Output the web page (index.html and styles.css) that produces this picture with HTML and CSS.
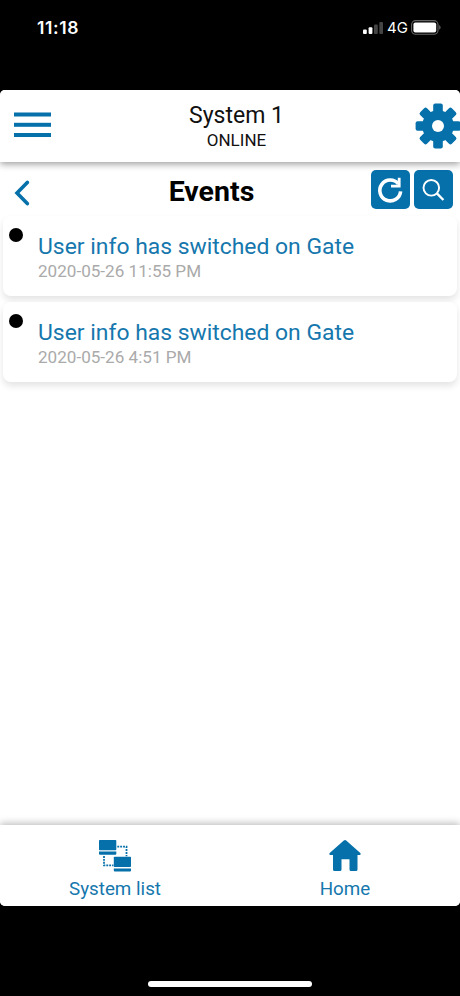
FILE: index.html
```html
<!DOCTYPE html>
<html lang="en">
  <head>
    <meta charset="UTF-8" />
    <meta name="viewport" content="width=device-width, initial-scale=1.0" />
    <title>Events</title>
    <link rel="stylesheet" href="styles.css">
  </head>
  <body>
    <div class="status-bar">
      <span class="time">11:18</span>
      <svg class="signal" width="20" height="12" viewBox="0 0 20 12">
        <rect x="0" y="7.5" width="3.8" height="4.5" rx="1" fill="#fff" />
        <rect x="5.6" y="5.2" width="3.8" height="6.8" rx="1" fill="#fff" />
        <rect x="11" y="2.6" width="3.8" height="9.4" rx="1" fill="#444" />
        <rect x="16.3" y="0" width="3.7" height="12" rx="1" fill="#444" />
      </svg>
      <span class="network">4G</span>
      <svg class="battery" width="30" height="15" viewBox="0 0 30 15">
        <rect x="0.6" y="0.6" width="26.4" height="13.6" rx="4" fill="none" stroke="#666" stroke-width="1.1" />
        <rect x="2.4" y="2.4" width="22.8" height="10" rx="2" fill="#fff" />
        <path d="M28.2 5.2c1.8.6 1.8 3.8 0 4.4z" fill="#666" />
      </svg>
    </div>

    <div class="app">
      <header class="header">
        <svg class="menu-icon" width="37" height="26" viewBox="0 0 37 26" fill="#0670aa">
          <rect y="0.5" width="37" height="4" />
          <rect y="10.8" width="37" height="4" />
          <rect y="21" width="37" height="4" />
        </svg>
        <div class="system">
          <div class="system-name">System 1</div>
          <div class="system-state">ONLINE</div>
        </div>
        <svg class="gear-icon" width="46" height="46" viewBox="-23 -23 46 46" fill="#0670aa">
          <rect x="-4.8" y="-22.4" width="9.6" height="44.8" rx="2" />
          <rect x="-4.8" y="-22.4" width="9.6" height="44.8" rx="2" transform="rotate(45)" />
          <rect x="-4.8" y="-22.4" width="9.6" height="44.8" rx="2" transform="rotate(90)" />
          <rect x="-4.8" y="-22.4" width="9.6" height="44.8" rx="2" transform="rotate(135)" />
          <circle r="15.8" />
          <circle r="6" fill="#fff" />
        </svg>
      </header>

      <main class="content">
        <div class="toolbar">
          <svg class="back-icon" width="16" height="26" viewBox="0 0 16 26">
            <path d="M13.3 2.4L3 13l10.3 10.6" fill="none" stroke="#0670aa" stroke-width="3.6" stroke-linecap="round" />
          </svg>
          <h1>Events</h1>
          <div class="actions">
            <button class="action" aria-label="Refresh">
              <svg width="39" height="39" viewBox="0 0 39 39" fill="none" stroke="#fff">
                <path d="M29.6 21.3A10.4 10.4 0 1 1 27.4 14" stroke-width="3.6" />
                <path d="M28.2 7.8v8.4H20" stroke-width="2.8" />
              </svg>
            </button>
            <button class="action" aria-label="Search">
              <svg width="39" height="39" viewBox="0 0 39 39" fill="none" stroke="#fff">
                <circle cx="17.3" cy="17.8" r="7.8" stroke-width="1.9" />
                <path d="M22.9 23.4l6.5 6.6" stroke-width="2.4" />
              </svg>
            </button>
          </div>
        </div>

        <div class="event">
          <span class="dot"></span>
          <div>
            <div class="event-title">User info has switched on Gate</div>
            <div class="event-date">2020-05-26 11:55 PM</div>
          </div>
        </div>
        <div class="event">
          <span class="dot"></span>
          <div>
            <div class="event-title">User info has switched on Gate</div>
            <div class="event-date">2020-05-26 4:51 PM</div>
          </div>
        </div>
      </main>

      <nav class="tabs">
        <a class="tab">
          <svg width="34" height="34" viewBox="0 0 34 34" fill="#0670aa">
            <rect x="1" y="1" width="17.3" height="10.3" rx="0.8" />
            <path d="M1 12.6h17.3v2.2a1 1 0 0 1-1 1H2a1 1 0 0 1-1-1z" />
            <rect x="15.8" y="17.8" width="17.2" height="10.3" rx="0.8" />
            <path d="M15.8 29.4H33v2.2a1 1 0 0 1-1 1H16.8a1 1 0 0 1-1-1z" />
            <path d="M19.3 7.7h9.2v9.5M6 17v9.3h9.5" fill="none" stroke="#0670aa" stroke-width="1.8" stroke-dasharray="1.9 1" />
          </svg>
          <span>System list</span>
        </a>
        <a class="tab">
          <svg width="34" height="34" viewBox="0 0 34 34" fill="#0670aa">
            <path d="M15.8 1.6a1.8 1.8 0 0 1 2.4 0L32.3 14c.8.8.4 2-.7 2h-2.1v14.5a1.5 1.5 0 0 1-1.5 1.5h-5a1.5 1.5 0 0 1-1.5-1.5V20.3h-8v10.2A1.5 1.5 0 0 1 12 32H6.5A1.5 1.5 0 0 1 5 30.5V16H2.4c-1.1 0-1.5-1.2-.7-2z" />
          </svg>
          <span>Home</span>
        </a>
      </nav>
    </div>

    <div class="home-indicator"></div>
  </body>
</html>
```

FILE: styles.css
```css
* {
  box-sizing: border-box;
}
body {
  margin: 0;
  height: 996px;
  background-color: #000;
  font-family: Roboto, sans-serif;
  display: flex;
  flex-direction: column;
  overflow: hidden;
}
svg {
  display: block;
  flex: none;
}
.status-bar {
  height: 90px;
  padding: 16px 19px 0 37px;
  display: flex;
  align-items: flex-start;
  color: #fff;
  font-family: Inter, sans-serif;
}
.time {
  font-size: 17.5px;
  font-weight: 600;
  letter-spacing: 0.6px;
  line-height: 24px;
  flex: 1;
}
.signal {
  margin-top: 6px;
}
.network {
  font-size: 15px;
  font-weight: 400;
  line-height: 24px;
  width: 28px;
  padding-left: 4px;
}
.battery {
  margin-top: 4px;
}
.app {
  height: 816px;
  background-color: #fff;
  border-radius: 5px;
  overflow: hidden;
  display: flex;
  flex-direction: column;
}
.header {
  height: 72px;
  display: flex;
  align-items: center;
  justify-content: space-between;
  padding-left: 14px;
  background-color: #fff;
  box-shadow: 0 2px 7px rgba(0, 0, 0, 0.4);
  z-index: 2;
}
.menu-icon {
  margin-top: -2px;
}
.system {
  text-align: center;
  color: #111;
  padding: 1px 0 0 7px;
}
.system-name {
  font-size: 23px;
  line-height: 28px;
}
.system-state {
  font-size: 17px;
  line-height: 21px;
}
.gear-icon {
  margin: 0 -1px 0 0;
}
.content {
  flex: 1;
}
.toolbar {
  height: 54px;
  padding: 0 7px 0 14px;
  display: flex;
  align-items: center;
  justify-content: space-between;
}
.back-icon {
  margin-top: 8px;
}
h1 {
  margin: 0;
  padding: 5px 0 0 22px;
  font-size: 28.5px;
  line-height: 34px;
  color: #000;
}
.actions {
  display: flex;
  gap: 4px;
}
.action {
  width: 39px;
  height: 39px;
  padding: 0;
  border: 0;
  border-radius: 5px;
  background-color: #0670aa;
}
.event {
  height: 80px;
  margin: 0 3px 6px;
  padding: 18px 6px 0;
  display: flex;
  gap: 14px;
  border-radius: 8px;
  background-color: #fff;
  box-shadow: 0 4px 7px rgba(0, 0, 0, 0.11);
}
.dot {
  width: 14px;
  height: 14px;
  margin: -6px 1px 0 0;
  border-radius: 50%;
  background-color: #000;
}
.event-title {
  font-size: 22.9px;
  line-height: 26px;
  color: #1577ad;
}
.event-date {
  font-size: 17.1px;
  line-height: 22px;
  color: #aaa;
}
.tabs {
  height: 81px;
  display: flex;
  background-color: #fff;
  box-shadow: 0 -2px 7px rgba(0, 0, 0, 0.25);
}
.tab {
  flex: 1;
  display: flex;
  flex-direction: column;
  align-items: center;
  padding-top: 14px;
  color: #1577ad;
  font-size: 18.8px;
  line-height: 32px;
}
.home-indicator {
  width: 164px;
  height: 6px;
  margin: 75px auto 0;
  border-radius: 3px;
  background-color: #fff;
}
```
